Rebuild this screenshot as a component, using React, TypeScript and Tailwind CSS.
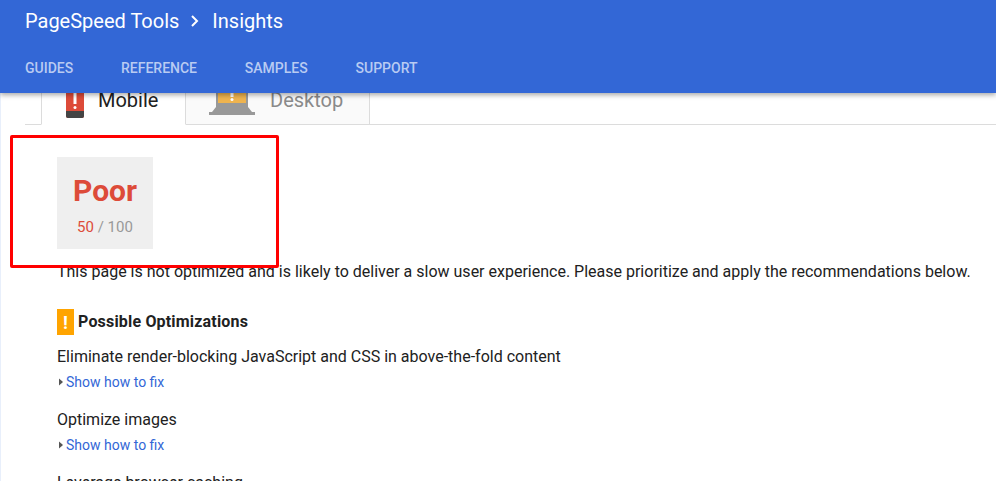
export default function App() {
  const font = { fontFamily: "Roboto, sans-serif" };
  return (
    <div style={font} className="relative flex h-[481px] w-[996px] flex-col overflow-hidden bg-white text-[#212121]">
      <header className="relative z-10 h-[93px] shrink-0 bg-[#3367d6] pl-[25px] shadow-[0_2px_5px_rgba(0,0,0,0.35)]">
        <div className="flex h-[42px] items-center text-[20px] text-white">
          <span>PageSpeed Tools</span>
          <svg width="24" height="24" viewBox="0 0 24 24" className="ml-[4px] mr-[5px]" fill="none" stroke="white" strokeWidth="2">
            <path d="M9 7l5 5-5 5" />
          </svg>
          <span>Insights</span>
        </div>
        <nav className="mt-[17px] flex gap-[47.8px] text-[14px] leading-[18px] font-medium text-[#b9cbf2] uppercase">
          <span>Guides</span>
          <span>Reference</span>
          <span>Samples</span>
          <span>Support</span>
        </nav>
      </header>

      <div className="flex-1 border-l border-[#e8effb] pl-[24px]">
        <div className="flex h-[32px] border-b border-[#dcdcdc] pl-[16px]">
          <div className="flex h-[32px] w-[145px] items-end border-x border-b border-[#dcdcdc] border-b-white bg-white pb-[17px] pl-[24px] text-[20px] leading-[14px]">
            <svg width="18" height="34" viewBox="0 0 18 34" className="mr-[14px] mb-[-12px] shrink-0">
              <rect x="0" y="0" width="18" height="33" rx="2" fill="#dd4b39" />
              <path d="M0 26h18v5a2 2 0 0 1-2 2H2a2 2 0 0 1-2-2z" fill="#444" />
              <rect x="7.5" y="4" width="3" height="15" fill="#fff" />
              <rect x="7.5" y="21" width="3" height="3" rx="1.5" fill="#fff" />
            </svg>
            <span className="text-[#212121]">Mobile</span>
          </div>
          <div className="flex h-[31px] w-[184px] items-end border-r border-[#dcdcdc] bg-[#fafafa] pb-[17px] pl-[23px] text-[20px] leading-[14px] text-[#8a8a8a]">
            <svg width="46" height="30" viewBox="0 0 46 30" className="mr-[15px] mb-[-8px] shrink-0">
              <rect x="7" y="0" width="32" height="22" fill="#999" />
              <rect x="9" y="0" width="28" height="18" fill="#efb44f" />
              <rect x="21.5" y="3" width="3" height="9" fill="#fff" />
              <rect x="21.5" y="13" width="3" height="3" rx="1.5" fill="#fff" />
              <path d="M7 22h32l4 5H3z" fill="#999" />
              <rect x="0" y="27" width="46" height="3" fill="#999" />
            </svg>
            <span>Desktop</span>
          </div>
        </div>

        <div className="pt-[32px] pl-[32px]">
          <div className="flex h-[92px] w-[96px] flex-col items-center bg-[#efefef]">
            <div className="mt-[16px] text-[30px] leading-[36px] font-bold text-[#dd4b39]">Poor</div>
            <div className="mt-[8px] text-[15px] leading-[20px] text-[#999]">
              <span className="text-[#dd4b39]">50</span> / 100
            </div>
          </div>

          <p className="mt-[13px] text-[16px] leading-[20px] whitespace-nowrap">
            This page is not optimized and is likely to deliver a slow user experience. Please prioritize and apply the recommendations below.
          </p>

          <h3 className="mt-[27px] flex h-[26px] items-center text-[16px] font-bold tracking-[0.18px]">
            <span className="mr-[4px] flex h-[26px] w-[17px] items-center justify-center bg-[#ffa400] text-[18px] font-bold text-white">!</span>
            Possible Optimizations
          </h3>

          <div className="mt-[10px] text-[16px] leading-[24px]">Eliminate render-blocking JavaScript and CSS in above-the-fold content</div>
          <ShowHow />
          <div className="mt-[14px] text-[16px] leading-[24px]">Optimize images</div>
          <ShowHow />
          <div className="mt-[14px] text-[16px] leading-[24px]">Leverage browser caching</div>
        </div>
      </div>

      <div className="absolute top-[135px] left-[10px] h-[133px] w-[269px] rounded-[2px] border-[3px] border-[#f00]" />
    </div>
  );
}

function ShowHow() {
  return (
    <div className="mt-[1px] flex h-[24px] items-center text-[14px] text-[#3367d6]">
      <svg width="9" height="10" viewBox="0 0 9 10" className="shrink-0">
        <path d="M2 1.5l4 3.5-4 3.5z" fill="#555" />
      </svg>
      <span>Show how to fix</span>
    </div>
  );
}
